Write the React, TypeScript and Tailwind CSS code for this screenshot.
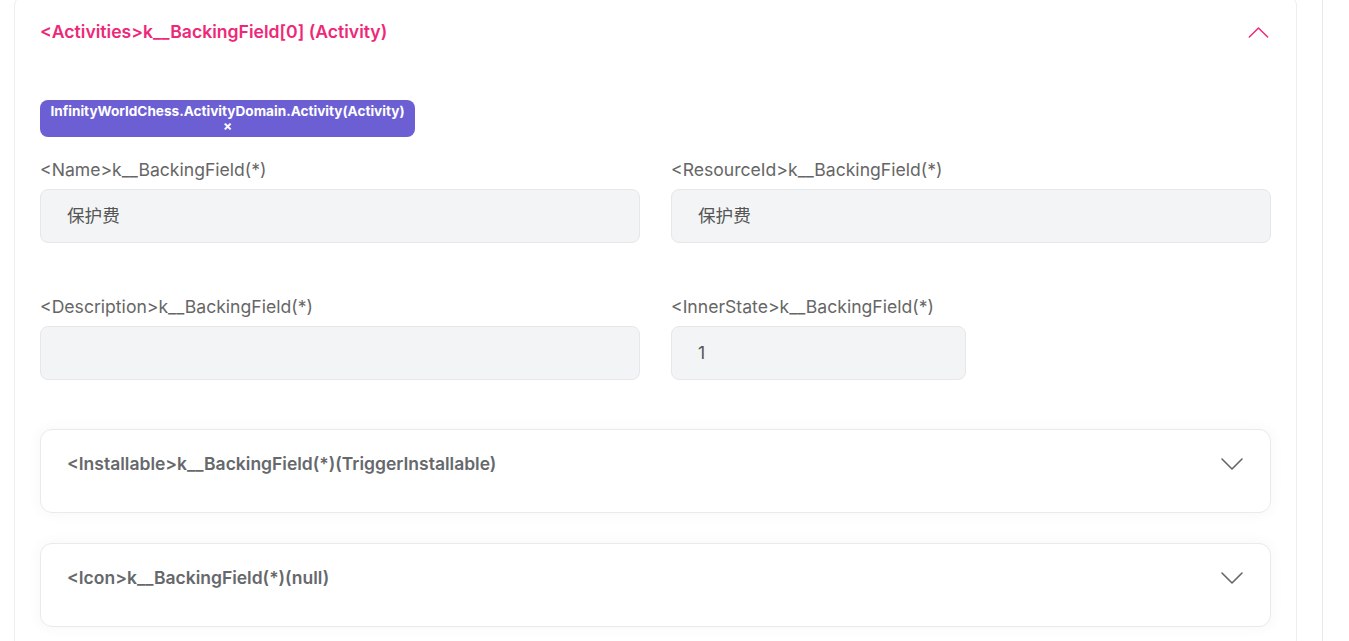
import React, { useState } from 'react';

const Chevron: React.FC<{ up?: boolean; className?: string }> = ({ up, className }) => (
  <svg className={className} viewBox="0 0 22 12" fill="none" stroke="currentColor" strokeWidth={1.6} strokeLinecap="round" strokeLinejoin="round">
    {up ? <path d="M1 11L11 1l10 10" /> : <path d="M1 1l10 10L21 1" />}
  </svg>
);

const Field: React.FC<{ label: string; value?: string; narrow?: boolean }> = ({ label, value, narrow }) => (
  <div className="flex flex-col">
    <label className="text-[17.6px] leading-[20px] text-[#666]">{label}</label>
    <div
      className={`mt-[9px] h-[54px] rounded-lg border border-[#e6e7ea] bg-[#f3f4f6] pl-[26px] flex items-center text-[17.6px] text-[#555] ${narrow ? 'w-[295px]' : 'w-full'}`}
    >
      {value}
    </div>
  </div>
);

const SubPanel: React.FC<{ title: string }> = ({ title }) => {
  const [open, setOpen] = useState(false);
  return (
    <div className="h-[84px] rounded-xl border border-[#e8eaec] bg-white shadow-[0_0_12px_4px_rgba(0,0,0,0.025)]">
      <button onClick={() => setOpen(!open)} className="w-full flex items-center justify-between pl-[26px] pr-[27px] pt-[24px] text-left">
        <span className="text-[17.5px] leading-[20px] font-semibold text-[#66686c]">{title}</span>
        <Chevron up={open} className="w-[22px] h-[12px] text-[#666]" />
      </button>
    </div>
  );
};

export default function App() {
  const [open, setOpen] = useState(true);

  return (
    <div className="h-[641px] overflow-hidden bg-white flex" style={{ fontFamily: 'Inter, "Noto Sans CJK SC", sans-serif' }}>
      <div className="w-[1322px] shrink-0 pl-[14px] pr-[25px]">
        <div className="-mt-[3px] rounded-lg border border-[#eceef1] bg-white px-[25px] pt-[22px] pb-[20px]">
          <button onClick={() => setOpen(!open)} className="w-full flex items-center justify-between text-left">
            <span className="text-[17.6px] leading-[24px] font-semibold text-[#ee2878]">
              &lt;Activities&gt;k__BackingField[0] (Activity)
            </span>
            <Chevron up={open} className="w-[21px] h-[11px] mr-[2px] text-[#ee2878]" />
          </button>

          <div className="mt-[56px] w-[375px] h-[37px] rounded-lg bg-[#6c5fd4] flex flex-col items-center justify-center text-white text-[13.6px] leading-[15px] font-bold">
            <span>InfinityWorldChess.ActivityDomain.Activity(Activity)</span>
            <span>×</span>
          </div>

          <div className="mt-[23px] grid grid-cols-2 gap-x-[31px] gap-y-[54px]">
            <Field label="<Name>k__BackingField(*)" value="保护费" />
            <Field label="<ResourceId>k__BackingField(*)" value="保护费" />
            <Field label="<Description>k__BackingField(*)" />
            <Field label="<InnerState>k__BackingField(*)" value="1" narrow />
          </div>

          <div className="mt-[49px] flex flex-col gap-[30px]">
            <SubPanel title="<Installable>k__BackingField(*)(TriggerInstallable)" />
            <SubPanel title="<Icon>k__BackingField(*)(null)" />
          </div>
        </div>
      </div>
      <div className="flex-1 border-l border-[#e6e7eb]" />
    </div>
  );
}
